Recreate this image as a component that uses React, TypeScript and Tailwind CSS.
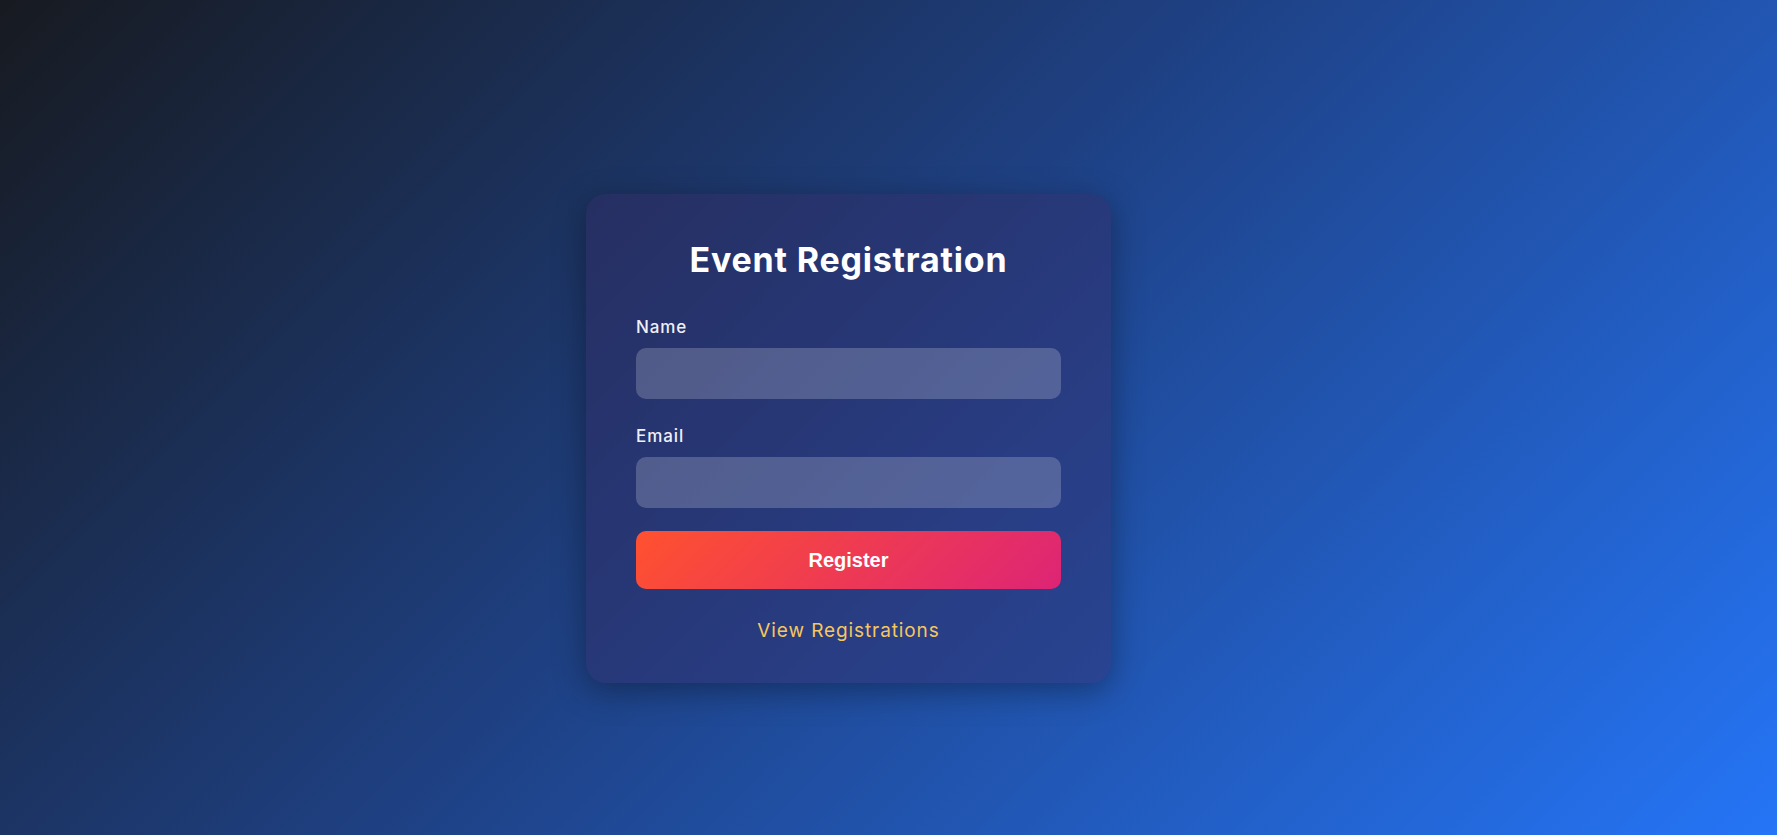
import React from 'react'

export default function App() {
  return (
    <div
      className="min-h-screen w-full flex items-start justify-center pt-[194px] pr-[80px] bg-[linear-gradient(135deg,#171a20_0%,#1e3f80_45%,#2575f7_100%)]"
      style={{ fontFamily: 'Inter, "Noto Sans", sans-serif' }}
    >
      {/* Card */}
      <div className="w-[525px] rounded-[20px] bg-[rgba(52,42,100,0.42)] shadow-[0_8px_32px_rgba(0,0,0,0.35)] px-[50px] pt-[42px] pb-[39px]">
        <h1 className="text-center text-white text-[34px] leading-[48px] font-bold tracking-[0.8px]">
          Event Registration
        </h1>

        <form className="mt-[31px] flex flex-col" onSubmit={(e) => e.preventDefault()}>
          <label className="text-[17px] leading-[24px] font-medium tracking-[0.9px] text-[#eef0f7]">Name</label>
          <input
            type="text"
            className="mt-[9px] h-[51px] w-full rounded-[10px] bg-white/20 px-4 text-white outline-none"
          />

          <label className="mt-[25px] text-[17px] leading-[24px] font-medium tracking-[0.9px] text-[#eef0f7]">Email</label>
          <input
            type="email"
            className="mt-[9px] h-[51px] w-full rounded-[10px] bg-white/20 px-4 text-white outline-none"
          />

          <button
            type="submit"
            className="mt-[23px] h-[58px] w-full rounded-[10px] bg-[linear-gradient(135deg,#ff512f,#dd2476)] text-white text-[20px] font-bold"
            style={{ fontFamily: '"Liberation Sans", Arial, sans-serif' }}
          >
            Register
          </button>
        </form>

        <div className="mt-[28px] text-center">
          <a href="#" className="text-[19px] leading-[27px] tracking-[0.9px] text-[#f7c75c]">
            View Registrations
          </a>
        </div>
      </div>
    </div>
  )
}
